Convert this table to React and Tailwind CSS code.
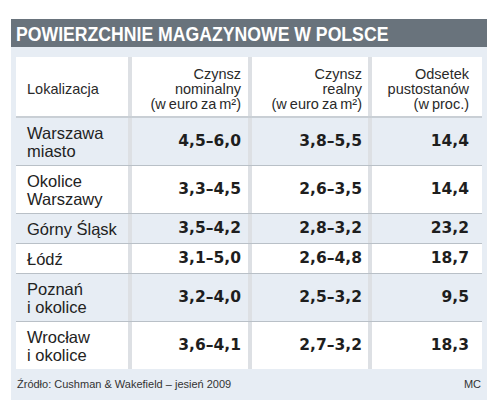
const rows = [
  { name: ["Warszawa", "miasto"], nom: "4,5–6,0", real: "3,8–5,5", vac: "14,4", blue: true },
  { name: ["Okolice", "Warszawy"], nom: "3,3–4,5", real: "2,6–3,5", vac: "14,4", blue: false },
  { name: ["Górny Śląsk"], nom: "3,5–4,2", real: "2,8–3,2", vac: "23,2", blue: true },
  { name: ["Łódź"], nom: "3,1–5,0", real: "2,6–4,8", vac: "18,7", blue: false },
  { name: ["Poznań", "i okolice"], nom: "3,2–4,0", real: "2,5–3,2", vac: "9,5", blue: true },
  { name: ["Wrocław", "i okolice"], nom: "3,6–4,1", real: "2,7–3,2", vac: "18,3", blue: false },
];

const sans = "font-['Liberation_Sans',Arial,sans-serif]";
const num = "font-['DejaVu_Sans',sans-serif] font-bold text-[15.5px] text-[#1e1e1e]";

const App = () => {
  return (
    <div className={`w-[488px] h-[415px] bg-white pt-[19px] pl-[11px] pr-[1px] ${sans}`}>
      <div className="h-[28px] bg-[#69737c] pl-[5px] flex items-center overflow-hidden">
        <span className="inline-block origin-left scale-x-[0.84] text-white font-bold text-[21px] leading-none whitespace-nowrap pt-[1px]">
          POWIERZCHNIE MAGAZYNOWE W POLSCE
        </span>
      </div>

      <div className="bg-[#e7edf4] px-[5px] pt-[10px] h-[353px]">
        {/* header */}
        <div className="flex h-[61px] bg-white border-b-2 border-[#c9cfd5] text-[14.5px] leading-[15px] text-[#2a2a2a] [word-spacing:-1px]">
          <div className="w-[116px] pl-[11px] pt-[6px] flex items-center border-r-4 border-[#dde0e4]">
            Lokalizacja
          </div>
          <div className="w-[120px] pr-[7px] pt-[5px] flex flex-col justify-center items-end text-right border-r-4 border-[#dde0e4]">
            <span>Czynsz</span>
            <span>nominalny</span>
            <span>(w euro za m²)</span>
          </div>
          <div className="w-[120px] pr-[6px] pt-[5px] flex flex-col justify-center items-end text-right border-r-4 border-[#dde0e4]">
            <span>Czynsz</span>
            <span>realny</span>
            <span>(w euro za m²)</span>
          </div>
          <div className="w-[106px] pr-[9px] pt-[5px] flex flex-col justify-center items-end text-right">
            <span>Odsetek</span>
            <span>pustostanów</span>
            <span>(w proc.)</span>
          </div>
        </div>

        {rows.map((r, i) => (
          <div
            key={i}
            className={`flex ${r.blue ? "bg-[#e7edf4]" : "bg-white"} ${
              i < rows.length - 1 ? "border-b border-[#b9c0c7]" : ""
            }`}
          >
            <div className="w-[116px] pl-[11px] pt-[6px] pb-[5px] border-r-4 border-[#dde0e4] text-[16.5px] leading-[18px] text-[#222]">
              {r.name.map((n) => (
                <div key={n}>{n}</div>
              ))}
            </div>
            <div className={`w-[120px] pr-[7px] flex items-center justify-end border-r-4 border-[#dde0e4] ${num}`}>
              {r.nom}
            </div>
            <div className={`w-[120px] pr-[6px] flex items-center justify-end border-r-4 border-[#dde0e4] ${num}`}>
              {r.real}
            </div>
            <div className={`w-[106px] pr-[9px] flex items-center justify-end ${num}`}>{r.vac}</div>
          </div>
        ))}

        <div className="flex justify-between items-center h-[27px] pl-[1px] pr-[1px] pt-[3px] text-[11px] text-[#333]">
          <span>Źródło: Cushman &amp; Wakefield – jesień 2009</span>
          <span>MC</span>
        </div>
      </div>
    </div>
  );
};

export default App;
